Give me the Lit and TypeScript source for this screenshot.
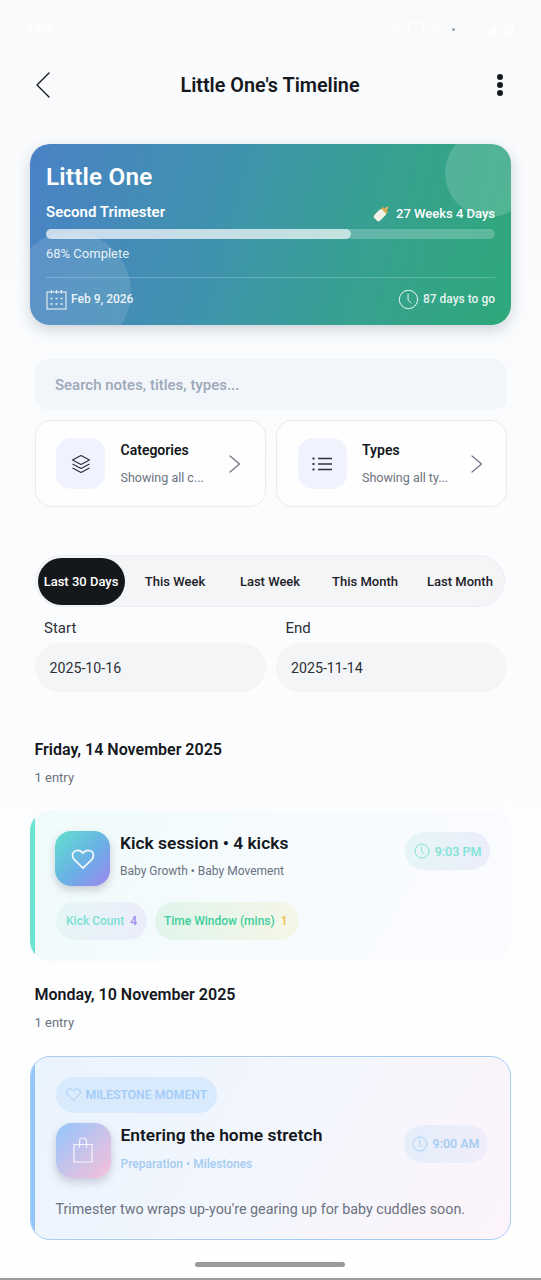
import { LitElement, html, css } from "lit";
import { customElement } from "lit/decorators.js";

const clock = (size: number, color: string, sw = 1.4) => html`<svg width=${size} height=${size} viewBox="0 0 24 24" fill="none" stroke=${color} stroke-width=${sw} stroke-linecap="round" stroke-linejoin="round"><circle cx="12" cy="12" r="10.5"/><path d="M11.5 6v6.5l3.5 3.5"/></svg>`;
const heart = (size: number, color: string, sw = 1.6) => html`<svg width=${size} height=${size} viewBox="0 0 24 24" fill="none" stroke=${color} stroke-width=${sw} stroke-linejoin="round"><path d="M12 20.5 4 12.6C1.8 10.4 1.8 7.2 3.8 5.3c2-1.900 5.300-1.800 7.200.3l1 1.100 1-1.100c1.900-2.100 5.200-2.200 7.200-.3 2 1.900 2 5.100-.2 7.300L12 20.5Z"/></svg>`;
const chevron = html`<svg class="chev" width="14" height="20" viewBox="0 0 14 20" fill="none" stroke="#6b7280" stroke-width="1.2" stroke-linecap="round" stroke-linejoin="round"><path d="M2 2l9.500 8L2 18"/></svg>`;

@customElement("app-root")
export class AppRoot extends LitElement {
  static styles = css`
    :host { display: block; width: 541px; height: 1280px; overflow: hidden; font-family: Roboto, "Liberation Sans", sans-serif; color: #14181d; background: linear-gradient(180deg, #f8fafc 0%, #fbfcfe 45%, #ffffff 100%); position: relative; }
    * { box-sizing: border-box; }
    .status { height: 38px; padding: 20px 26px 0 25px; display: flex; align-items: center; justify-content: space-between; color: rgba(255,255,255,.95); font-size: 14px; font-weight: 500; }
    .status-icons { display: flex; align-items: center; gap: 7px; opacity: .75; }
    .dot { width: 3px; height: 3px; border-radius: 50%; background: #7d838a; }
    .header { height: 24px; margin: 35px 38px 0 36px; display: flex; align-items: center; justify-content: space-between; position: relative; }
    .title { font-size: 19.8px; font-weight: 600; flex: 1; text-align: center; padding-right: 7px; }
    .more { display: flex; flex-direction: column; gap: 2px; }
    .more i { width: 6px; height: 6px; border-radius: 50%; background: #14181d; display: block; }
    .hero { margin: 47px 30px 0; height: 181px; border-radius: 20px; padding: 19px 16px 0; color: #fff; position: relative; overflow: hidden; background: linear-gradient(105deg, #4a82c6 0%, #3f93ad 40%, #37a18f 70%, #2ea87b 100%); }
    .shadow { position: absolute; left: 30px; top: 144px; width: 481px; height: 181px; border-radius: 20px; box-shadow: 0 5px 14px rgba(30,60,80,.2); }
    .bubble { position: absolute; border-radius: 50%; background: rgba(255,255,255,.16); }
    .b1 { width: 88px; height: 88px; left: 415px; top: -15px; }
    .b2 { width: 120px; height: 120px; left: -19px; top: 88px; background: rgba(255,255,255,.12); }
    .hero > div:not(.bubble) { position: relative; }
    .name { font-size: 24.3px; font-weight: 600; line-height: 28px; letter-spacing: .2px; }
    .row { display: flex; justify-content: space-between; align-items: center; }
    .tri { margin-top: 10px; height: 22px; font-size: 15px; font-weight: 600; }
    .weeks { display: flex; align-items: center; gap: 5px; font-size: 13px; font-weight: 500; margin-top: 2px; }
    .track { margin-top: 6px; height: 10px; border-radius: 5px; background: rgba(255,255,255,.22); }
    .fill { width: 68%; height: 100%; border-radius: 5px; background: rgba(255,255,255,.62); }
    .pct { margin-top: 6px; font-size: 13px; line-height: 18px; color: rgba(255,255,255,.88); }
    .rule { margin-top: 14px; height: 1px; background: rgba(255,255,255,.22); }
    .meta { margin-top: 10px; height: 22px; font-size: 12px; font-weight: 500; color: rgba(255,255,255,.9); }
    .meta span { display: flex; align-items: center; gap: 4px; }
    .content { padding: 0 34px 0 34.5px; }
    .search { margin-top: 34px; height: 51px; border-radius: 14px; background: #f2f5fa; padding: 0 20.5px; display: flex; align-items: center; font-size: 15px; font-weight: 500; color: #9ca8b8; }
    .pickers { margin-top: 10px; display: grid; grid-template-columns: 231px 231px; gap: 10.5px; }
    .picker { height: 87px; border: 1px solid #e8ebee; border-radius: 16px; background: #fefefe; display: flex; align-items: center; padding: 0 22.5px 0 20.5px; }
    .pi { width: 49px; height: 51px; flex: none; border-radius: 15px; background: #f0f3fe; display: flex; align-items: center; justify-content: center; }
    .pt { margin-left: 15.5px; flex: none; }
    .pt b { display: block; font-size: 14px; font-weight: 600; line-height: 18px; margin-bottom: 10px; }
    .pt span { display: block; font-size: 12.5px; color: #6b7280; line-height: 18px; white-space: nowrap; }
    .chev { margin-left: auto; flex: none; }
    .seg { margin-top: 48px; width: 470.5px; height: 52px; border-radius: 26px; background: #f4f5f7; border: 1px solid #eceef1; padding: 2px; display: flex; align-items: center; font-size: 13px; font-weight: 500; color: #1c2127; }
    .seg span { width: 95px; text-align: center; flex: none; }
    .seg .on { width: 87px; height: 47px; line-height: 47px; border-radius: 24px; background: #14181b; color: #fff; margin-right: 3px; flex: none; }
    .dates { margin-top: 10px; display: grid; grid-template-columns: 231px 231px; gap: 10.5px; }
    .dates label { display: block; padding-left: 9.5px; font-size: 15px; line-height: 22px; color: #2b3036; }
    .input { margin-top: 4px; height: 49px; border-radius: 25px; background: #f4f5f7; padding: 0 15px; display: flex; align-items: center; font-size: 14.2px; color: #2b3036; }
    .day { font-size: 16px; font-weight: 600; line-height: 22px; margin-top: 47px; color: #14181d; }
    .day.second { margin-top: 23px; }
    .count { margin-top: 9px; font-size: 13px; line-height: 16px; color: #6b7280; }
    .entry { margin: 0 30px; border-radius: 20px; position: relative; overflow: hidden; }
    .entry::before { content: ""; position: absolute; left: 0; top: 0; bottom: 0; width: 5px; }
    .e1 { margin-top: 25px; height: 150px; padding: 20px 21px 0 25px; background: linear-gradient(120deg, #effbfa 0%, #f7fbfe 50%, #fbfbfe 100%); }
    .e1::before { background: #6fe3d2; }
    .e2 { margin-top: 25px; height: 184px; border: 1.5px solid #a8cdf1; padding: 19.500px 19.500px 0 24.500px; background: linear-gradient(120deg, #eaf4fe 0%, #f4f6fd 55%, #fcf4f9 100%); }
    .e2::before { background: #93c5f8; left: -1.500px; top: -1.500px; bottom: -1.500px; }
    .e-top { display: flex; align-items: flex-start; }
    .tile { width: 55px; height: 55px; border-radius: 16px; flex: none; display: flex; align-items: center; justify-content: center; }
    .t1 { background: linear-gradient(135deg, #5fe0cc 0%, #6bb0e6 55%, #9d84ee 100%); box-shadow: 0 4px 8px rgba(90,90,120,.28); }
    .t2 { background: linear-gradient(135deg, #93c5fd 0%, #f9c0d8 100%); box-shadow: 0 4px 8px rgba(90,90,120,.28); }
    .e-text { margin-left: 10px; flex: 1; }
    .e-title { font-size: 17.400px; font-weight: 600; line-height: 24px; color: #14181d; }
    .e-sub { margin-top: 8px; font-size: 12px; line-height: 16px; color: #6b7280; }
    .time { height: 38px; width: 85px; border-radius: 19px; display: flex; align-items: center; justify-content: center; gap: 5px; font-size: 12.5px; font-weight: 500; background: linear-gradient(100deg, #e5f6f6, #ecedfb); color: #7de3d5; margin-top: 1px; }
    .chips { margin-top: 16px; display: flex; gap: 8px; margin-left: 1px; }
    .chip { height: 38px; border-radius: 19px; display: flex; align-items: center; padding: 0 10px; gap: 6px; font-size: 12px; font-weight: 500; }
    .c1 { background: linear-gradient(100deg, #e5f6f6, #ecedfb); color: #7be0d2; }
    .c1 em { color: #a08ced; font-style: normal; }
    .c2 { background: linear-gradient(100deg, #e0f5ec, #f6f6e7); color: #3fce9d; padding: 0 11px 0 9px; }
    .c2 em { color: #f2bd3c; font-style: normal; }
    .badge { height: 36px; width: 161px; border-radius: 18px; background: #d9eafd; color: #a1caf6; display: flex; align-items: center; padding-left: 9px; gap: 4px; font-size: 12.200px; font-weight: 500; }
    .e2 .e-top { margin-top: 10px; }
    .e2 .e-sub { margin-top: 9px; color: #a3cbf1; font-weight: 500; }
    .e2 .time { background: linear-gradient(100deg, #e4eefb, #f0edf9); color: #a3cbf1; margin-top: 2px; width: 84px; margin-right: 3px; }
    .desc { margin-top: 21px; font-size: 14.300px; line-height: 20px; color: #6b7280; white-space: nowrap; }
    .home { position: absolute; left: 195px; top: 1262px; width: 150px; height: 5px; border-radius: 3px; background: #9a9a9a; }
    .edge { position: absolute; left: 0; right: 0; bottom: 0; height: 2px; background: #9d9d9d; }
  `;

  render() {
    return html`
      <div class="shadow"></div>
      <div class="status">
        <span>9:03</span>
        <div class="status-icons">
          <svg width="14" height="14" viewBox="0 0 14 14" fill="none" stroke="#fff" stroke-width="1.5"><circle cx="4" cy="7" r="2"/><circle cx="10" cy="3" r="2"/><circle cx="10" cy="11" r="2"/></svg>
          <svg width="16" height="14" viewBox="0 0 16 14" fill="none" stroke="#fff" stroke-width="1.5"><rect x="1" y="1" width="14" height="12" rx="2"/></svg>
          <svg width="14" height="14" viewBox="0 0 14 14" fill="none" stroke="#fff" stroke-width="1.6"><path d="M2 2c0 6 4 10 10 10V9l-3-1-1 1.500C6 8.500 5 7.500 4.500 6L6 5 5 2H2Z"/></svg>
          <span class="dot"></span>
          <span style="width:14px"></span>
          <svg width="14" height="14" viewBox="0 0 14 14" fill="#fff"><path d="M13 1v12H1L13 1Z"/></svg>
          <svg width="11" height="14" viewBox="0 0 11 14" fill="#fff"><path d="M3 2h5l2 1v10H1V3l2-1Z"/></svg>
        </div>
      </div>
      <div class="header">
        <svg width="14" height="26" viewBox="0 0 14 26" fill="none" stroke="#14181d" stroke-width="1.400" stroke-linecap="round" stroke-linejoin="round"><path d="M13 1 1 13l12 12"/></svg>
        <div class="title">Little One's Timeline</div>
        <div class="more"><i></i><i></i><i></i></div>
      </div>

      <div class="hero">
        <div class="bubble b1"></div>
        <div class="bubble b2"></div>
        <div class="name">Little One</div>
        <div class="row tri">
          <span>Second Trimester</span>
          <span class="weeks">
            <svg width="18" height="18" viewBox="0 0 18 18"><g transform="rotate(45 9 9)"><rect x="5" y="6" width="8" height="12" rx="2.500" fill="#f3f1e6"/><rect x="5.500" y="4" width="7" height="2.500" fill="#e4a94a"/><path d="M7.500 4 8.200 0.500h1.600L10.500 4Z" fill="#e9b45c"/></g></svg>
            27 Weeks 4 Days
          </span>
        </div>
        <div class="track"><div class="fill"></div></div>
        <div class="pct">68% Complete</div>
        <div class="rule"></div>
        <div class="row meta">
          <span>
            <svg width="21" height="21" viewBox="0 0 21 21" fill="none" stroke="#e8f2f6" stroke-width="1.100"><rect x="1" y="3" width="19" height="17"/><path d="M5.500 1v3.500M10.500 1v3.500M15.500 1v3.500"/><path d="M4.500 9.500h2M9.500 9.500h2M14.500 9.500h2M4.500 15h2M9.500 15h2M14.500 15h2" stroke-width="1.600"/></svg>
            Feb 9, 2026
          </span>
          <span>${clock(21, "#eef8f4", 1.1)} 87 days to go</span>
        </div>
      </div>

      <div class="content">
        <div class="search">Search notes, titles, types...</div>
        <div class="pickers">
          <div class="picker">
            <div class="pi">
              <svg width="20" height="20" viewBox="0 0 20 20" fill="none" stroke="#2b3140" stroke-width="1.200" stroke-linejoin="round"><path d="M10 1.500 1.500 6 10 10.500 18.500 6 10 1.500Z"/><path d="M1.500 10 10 14.500 18.500 10"/><path d="M1.500 14 10 18.500 18.500 14"/></svg>
            </div>
            <div class="pt"><b>Categories</b><span>Showing all c...</span></div>
            ${chevron}
          </div>
          <div class="picker">
            <div class="pi">
              <svg width="20" height="14" viewBox="0 0 20 14" fill="none" stroke="#2b3140" stroke-width="1.300"><path d="M6 1.500h14M6 7h14M6 12.500h14"/><path d="M0.500 1.500h2M0.500 7h2M0.500 12.500h2" stroke-width="2"/></svg>
            </div>
            <div class="pt"><b>Types</b><span>Showing all ty...</span></div>
            ${chevron}
          </div>
        </div>

        <div class="seg">
          <span class="on">Last 30 Days</span>
          <span>This Week</span><span>Last Week</span><span>This Month</span><span>Last Month</span>
        </div>

        <div class="dates">
          <div><label>Start</label><div class="input">2025-10-16</div></div>
          <div><label>End</label><div class="input">2025-11-14</div></div>
        </div>

        <div class="day">Friday, 14 November 2025</div>
        <div class="count">1 entry</div>
      </div>

      <div class="entry e1">
        <div class="e-top">
          <div class="tile t1">${heart(26, "#f4f8fd")}</div>
          <div class="e-text">
            <div class="e-title">Kick session • 4 kicks</div>
            <div class="e-sub">Baby Growth • Baby Movement</div>
          </div>
          <div class="time">${clock(16, "#7de3d5")} 9:03 PM</div>
        </div>
        <div class="chips">
          <div class="chip c1">Kick Count <em>4</em></div>
          <div class="chip c2">Time Window (mins) <em>1</em></div>
        </div>
      </div>

      <div class="content">
        <div class="day second">Monday, 10 November 2025</div>
        <div class="count">1 entry</div>
      </div>

      <div class="entry e2">
        <div class="badge">${heart(17, "#a1caf6", 1.4)} MILESTONE MOMENT</div>
        <div class="e-top">
          <div class="tile t2">
            <svg width="22" height="26" viewBox="0 0 22 26" fill="none" stroke="#f7f4fa" stroke-width="1.200" stroke-linejoin="round"><rect x="2" y="7.500" width="18" height="17.500"/><path d="M7.500 11V4.500a3.500 3.500 0 0 1 7 0V11"/></svg>
          </div>
          <div class="e-text">
            <div class="e-title">Entering the home stretch</div>
            <div class="e-sub">Preparation • Milestones</div>
          </div>
          <div class="time">${clock(16, "#a3cbf1")} 9:00 AM</div>
        </div>
        <div class="desc">Trimester two wraps up-you're gearing up for baby cuddles soon.</div>
      </div>

      <div class="home"></div>
      <div class="edge"></div>
    `;
  }
}
